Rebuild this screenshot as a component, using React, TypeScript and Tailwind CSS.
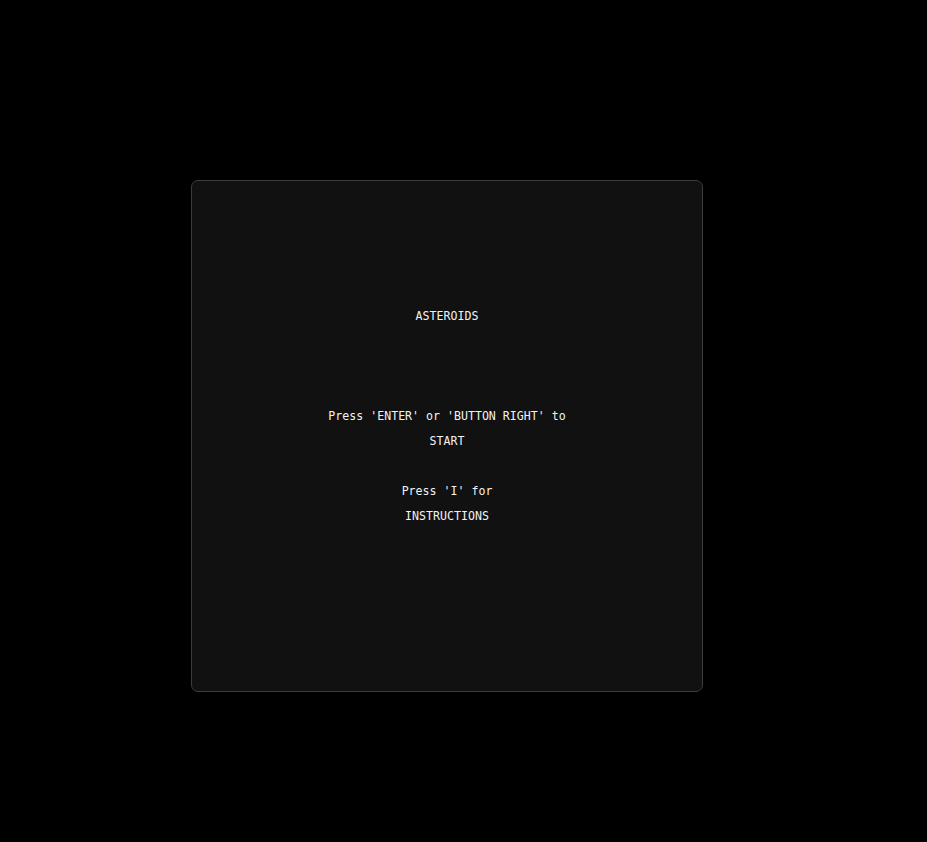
import React from 'react';

const App: React.FC = () => {
  return (
    <div className="min-h-screen w-full bg-black pt-[180px] pl-[191px]">
      <div
        className="w-[512px] h-[512px] rounded-[7px] border border-[#3c3c3f] bg-[#111111] flex flex-col items-center pt-[123px] text-[#f2f2f2] text-[11.6px] leading-[25px]"
        style={{ fontFamily: '"DejaVu Sans Mono", "Liberation Mono", monospace' }}
      >
        <p>ASTEROIDS</p>
        <div className="mt-[75px] flex flex-col items-center">
          <p className="whitespace-pre">Press 'ENTER' or 'BUTTON RIGHT' to</p>
          <p>START</p>
        </div>
        <div className="mt-[25px] flex flex-col items-center">
          <p className="whitespace-pre">Press 'I' for</p>
          <p>INSTRUCTIONS</p>
        </div>
      </div>
    </div>
  );
};

export default App;
